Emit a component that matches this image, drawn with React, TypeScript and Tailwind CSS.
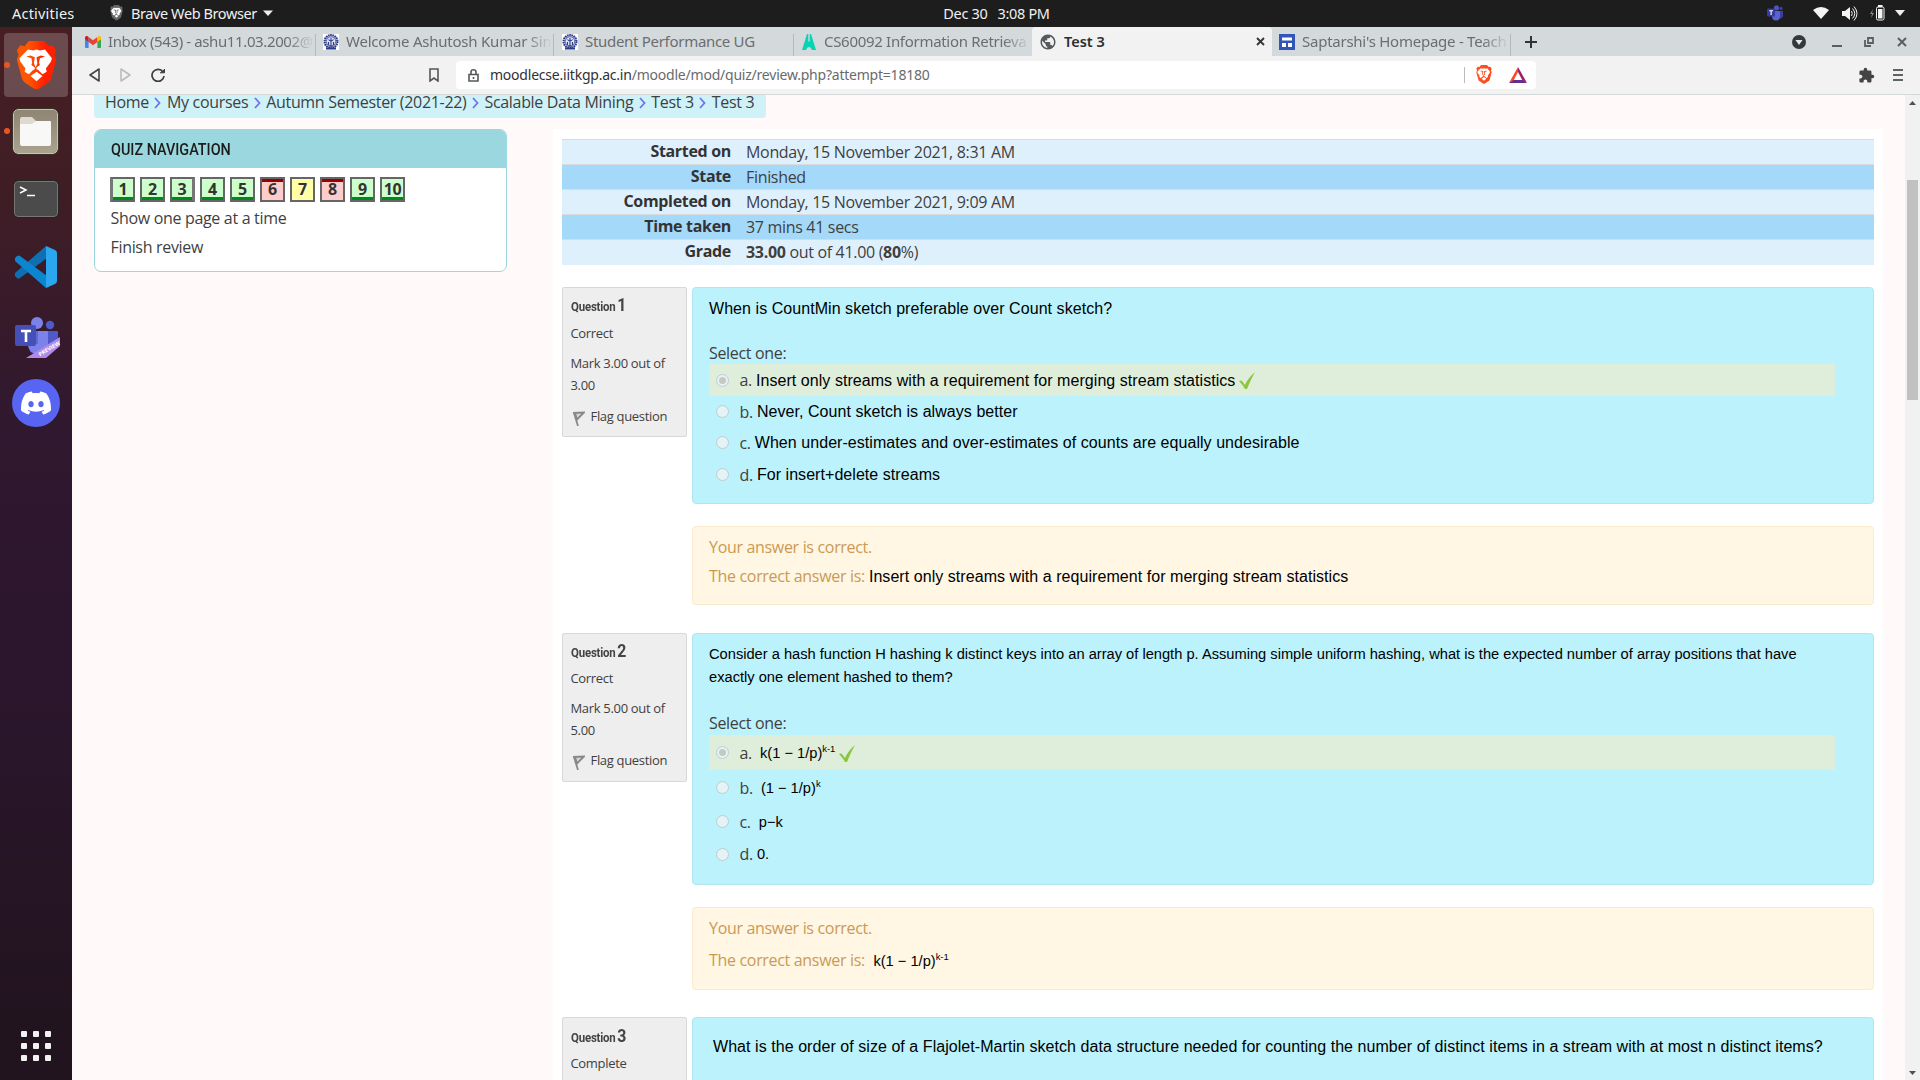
import React from "react";
import { SiDiscord } from "react-icons/si";
import { MdExtension, MdPublic } from "react-icons/md";

const OS = "font-['Open_Sans',sans-serif] tracking-[-0.32px]";
const LS = "font-['Liberation_Sans',Arial,sans-serif] tracking-[0.055px]";
const LS_SMALL = "font-['Liberation_Sans',Arial,sans-serif] text-[14.670px] tracking-normal";
const UI = "font-['Noto_Sans',sans-serif]";

function Lion({ size, id, a, b }: { size: number; id: string; a: string; b: string }) {
  return (
    <svg width={size} height={size * 1.19} viewBox="0 0 48 57">
      <defs>
        <linearGradient id={id} x1="0" x2="1">
          <stop offset="0.3" stopColor={a} />
          <stop offset="0.7" stopColor={b} />
        </linearGradient>
      </defs>
      <path fill={`url(#${id})`} d="M15 0h18l5 6 5-1 4 6-2 5 2 6-6 22q-1 3-4 5l-9 6-4 2-4-2-9-6q-3-2-4-5L1 22l2-6-2-5 4-6 5 1z" />
      <path fill="#fff" d="M14 10l6 1 4-1 4 1 6-1 8 10-1 4-6 8 1 4-5 3-5-5-2-1v-2l4-3-1-3 1-5 6-2-5-1-5 2 1 7-2 5-2-5 1-7-5-2-5 1 6 2 1 5-1 3 4 3v2l-2 1-5 5-5-3 1-4-6-8-1-4z" />
      <path fill="#fff" d="M24 36l7 5-7 6-7-6z" />
    </svg>
  );
}

function Gear() {
  return (
    <svg width="16" height="16" viewBox="0 0 16 16" className="shrink-0 bg-white">
      <circle cx="8" cy="7.5" r="6.4" fill="#dfe2f2" stroke="#2d3c86" strokeWidth="2.200" strokeDasharray="1.6 .6" />
      <circle cx="8" cy="7.5" r="4.700" fill="none" stroke="#47549a" strokeWidth=".8" />
      <path d="M8 4v8M5.500 5.500q2.500 3 5 0M6 12h4M5.500 8v3M10.500 8v3" fill="none" stroke="#2d3c86" strokeWidth="1.100" />
      <path d="M3 14.500h10" stroke="#2d3c86" strokeWidth="2" />
    </svg>
  );
}

function Gmail() {
  return (
    <svg width="16" height="12" viewBox="0 0 16 12" className="shrink-0">
      <path fill="#4285f4" d="M0 3v8q0 1 1 1h2.600V5z" />
      <path fill="#34a853" d="M12.400 12H15q1 0 1-1V3l-3.600 2z" />
      <path fill="#ea4335" d="M3.600 6V1L8 4.300 12.400 1v5L8 9.200z" />
      <path fill="#fbbc04" d="M12.400 1v5L16 3.200V1.700c0-1.500-1.700-2.200-2.800-1.300z" />
      <path fill="#c5221f" d="M0 1.700v1.500L3.600 6V1L2.800.4C1.700-.5 0 .2 0 1.700z" />
    </svg>
  );
}

function TeamsMark({ size }: { size: number }) {
  return (
    <svg width={size} height={size} viewBox="0 0 46 46">
      <circle cx="35" cy="9" r="4.200" fill="#5059c9" />
      <path fill="#5059c9" d="M32 15h10q1 0 1 1v12q0 5-6 7h-5z" />
      <circle cx="22" cy="7" r="6" fill="#7b83eb" />
      <path fill="#7b83eb" d="M13 15h19q1 0 1 1v12q0 10-10 10T13 28z" />
      <path fill="#6069cf" d="M13 15h10v13H13z" />
      <rect y="9" width="21" height="21" rx="2" fill="#464eb8" />
      <path d="M6 15h10M11 15v11" stroke="#fff" strokeWidth="2.600" />
    </svg>
  );
}

function TeamsTray() {
  return (
    <svg width="17" height="16" viewBox="0 0 17 16">
      <circle cx="14" cy="3.500" r="1.700" fill="#3a3fa0" />
      <path fill="#3a3fa0" d="M12 6h4v5q0 2-2.500 2.500H12z" />
      <circle cx="9.500" cy="2.800" r="2.600" fill="#4b53bc" />
      <path fill="#5a62d2" d="M5 6h8v5q0 4.500-4 4.500T5 11z" />
      <rect y="3.500" width="8" height="8" rx="1" fill="#363ba0" />
      <path d="M2.200 5.800h3.800M4.100 5.800V10" stroke="#fff" strokeWidth="1.100" />
    </svg>
  );
}

function Tab({ icon, text, w, tr, sep = true, fade = true }: { icon: React.ReactNode; text: string; w: string; tr: string; sep?: boolean; fade?: boolean }) {
  return (
    <div className={`flex h-[29px] shrink-0 items-center pt-px ${w}`}>
      <div className="flex w-[23px] shrink-0 items-center">{icon}</div>
      <div className={`min-w-0 flex-1 whitespace-nowrap pb-[2px] text-[15px] text-[#6a6e70] ${fade ? "[mask-image:linear-gradient(to_right,black_88%,rgba(0,0,0,0.15)_99%)]" : ""} ${tr}`}>{text}</div>
      <div className={`ml-[3px] h-[22px] w-px self-end ${sep ? "bg-[#b4b9bc]" : ""}`} />
    </div>
  );
}

function TopBar() {
  return (
    <div className={`grid h-[27px] grid-cols-[1fr_auto_1fr] items-center bg-[#1d1d1d] pb-px text-[14.500px] text-[#f0f0f0] ${UI}`}>
      <div className="flex items-center pl-3">
        <span className="w-[98px] tracking-[0.2px]">Activities</span>
        <span className="flex w-[21px]"><Lion size={13} id="lt" a="#666" b="#666" /></span>
        <span className="tracking-[-0.41px]">Brave Web Browser</span>
        <svg width="10" height="6" className="ml-[6px]"><path d="M0 .5h10L5 6z" fill="#eee" /></svg>
      </div>
      <div className="whitespace-pre pl-[73px] tracking-[-0.35px]">Dec 30   3:08 PM</div>
      <div className="flex items-center justify-end pr-[15px]">
        <div className="mr-[29px]"><TeamsTray /></div>
        <svg width="16" height="12" viewBox="0 0 16 12" className="mr-[13px]"><path d="M0 3Q8-3 16 3L8 12z" fill="#f4f4f4" /></svg>
        <svg width="16" height="15" viewBox="0 0 16 15" className="mr-[12px]" fill="none" stroke="#f4f4f4">
          <path d="M0 5h3l5-4v13L3 10H0z" fill="#f4f4f4" stroke="none" />
          <path d="M9.500 5q1.500 2.500 0 5" /><path d="M10.500 2.500q4.500 5 0 10M12 .5q6 7 0 14" />
        </svg>
        <svg width="15" height="16" viewBox="0 0 15 16" className="mr-[10px]">
          <path d="M3 4L0 9h2l-1 4 3-5H2z" fill="#888" />
          <rect x="6.500" y="2" width="7.500" height="13" rx="1.500" fill="none" stroke="#f4f4f4" />
          <path d="M8 4h4.500v9.500H8zM8 0h4.500v2H8z" fill="#f4f4f4" />
        </svg>
        <svg width="10" height="6"><path d="M0 0h10L5 6z" fill="#eee" /></svg>
      </div>
    </div>
  );
}

function Dock() {
  return (
    <div className="flex w-[72px] shrink-0 flex-col bg-[linear-gradient(#471f22_0px,#3f1d26_180px,#30182f_400px,#2b162d_650px,#22141f_1000px)]">
      <div className="flex h-[72px] items-center pt-1">
        <div className="relative ml-1 flex h-16 w-16 items-center justify-center rounded bg-white/20">
          <div className="absolute left-0 top-[29px] h-[6px] w-[6px] rounded-full bg-[#e95420]" />
          <Lion size={41} id="ld" a="#ff5500" b="#ff2000" />
        </div>
      </div>
      <div className="flex h-[64px] items-center">
        <div className="ml-1 mr-[3px] h-[6px] w-[6px] rounded-full bg-[#e95420]" />
        <div className="flex h-[45px] w-[45px] items-center justify-center rounded-[5px] border border-[#c9c2b3] bg-linear-to-b from-[#8e8673] to-[#aaa18f] outline outline-1 outline-[#3a302a]">
          <svg width="33" height="29"><path d="M1 2q0-2 2-2h10l4 4h14v6H1z" fill="#dedad0" /><path d="M1 7h12l4-3h14q1 0 1 1v22q0 2-2 2H3q-2 0-2-2z" fill="#f8f8f7" /></svg>
        </div>
      </div>
      <div className="flex h-[72px] items-center justify-center">
        <div className="h-[36px] w-[44px] rounded-[4px] border border-[#777] bg-[#4b4b4b] outline outline-1 outline-[#252525]">
          <svg width="42" height="32"><path d="M5 5l6 3-6 3" fill="none" stroke="#fff" strokeWidth="1.500" /><path d="M12 13.500h8" stroke="#fff" strokeWidth="1.500" /></svg>
        </div>
      </div>
      <div className="flex h-[64px] items-center justify-center">
        <svg width="42" height="42" viewBox="0 0 42 42">
          <path fill="#0f6fb3" d="M31 0l1 12L5 32q-1 1-3 0l-2-2q-1-1 0-3z" />
          <path fill="#0c86cf" d="M31 42l1-12L5 10q-1-1-3 0l-2 2q-1 1 0 3z" />
          <path fill="#2aa7ee" d="M31 0l9 4q2 1 2 3v28q0 2-2 3l-9 4z" />
        </svg>
      </div>
      <div className="flex h-[72px] items-center pl-[15px] pt-[7px]">
        <div className="relative h-[46px] w-[46px]">
          <TeamsMark size={46} />
          <svg width="46" height="46" className="absolute left-0 top-[-1px]"><path d="M11 43L45 22v9L31 43z" fill="#b08ae8" /><text x="25" y="41.500" fontSize="5.500" letterSpacing="0" fontWeight="700" fill="#fff" fontFamily="Open Sans" transform="rotate(-31 25 41.500)">PREVIEW</text></svg>
        </div>
      </div>
      <div className="flex h-[64px] items-center justify-center">
        <div className="flex h-12 w-12 items-center justify-center rounded-full bg-[#5865f2]"><SiDiscord size={30} color="#fff" /></div>
      </div>
      <div className="mt-auto mb-[19px] grid grid-cols-[6px_6px_6px] justify-center gap-[6px]">
        {Array.from({ length: 9 }, (_, i) => <div key={i} className="h-[6px] w-[6px] rounded-[1px] bg-[#f2f2f0]" />)}
      </div>
    </div>
  );
}

function Chrome() {
  return (
    <div className={`shrink-0 tracking-normal ${UI}`}>
      <div className="flex h-[29px] bg-[#d4d9dc] pl-[13px]">
        <Tab icon={<Gmail />} text="Inbox (543) - ashu11.03.2002@" w="w-[231px]" tr="tracking-[-0.38px]" />
        <div className="w-[7px]" />
        <Tab icon={<Gear />} text="Welcome Ashutosh Kumar Sin" w="w-[231px]" tr="tracking-[-0.22px]" />
        <div className="w-[8px]" />
        <Tab icon={<Gear />} text="Student Performance UG" w="w-[232px]" tr="tracking-[-0.3px]" fade={false} />
        <div className="w-[7px]" />
        <Tab
          icon={<svg width="16" height="16" viewBox="0 0 16 16"><path d="M6 0h4l5 16h-4q-1-3-3-3t-3 3H1zM7.300 0v7q.7 1.500 1.400 0V0z" fill="#08d3b2" fillRule="evenodd" /></svg>}
          text="CS60092 Information Retrieva" w="w-[231px]" tr="tracking-[-0.3px]" sep={false}
        />
        <div className="flex w-[240px] items-center rounded-t bg-[#f2f2f2] pl-[7px]">
          <MdPublic size={18} color="#565a5c" />
          <span className="ml-[7px] pb-px text-[14.500px] font-semibold text-[#2c2e30]">Test 3</span>
          <svg width="9" height="9" className="ml-auto mr-[7px]"><path d="M1 1l7 7M8 1l-7 7" stroke="#333" strokeWidth="1.800" /></svg>
        </div>
        <div className="w-[7px]" />
        <Tab
          icon={<svg width="16" height="16"><rect width="16" height="16" fill="#3156b8" /><path d="M3 3.500h10v3H3zM3 9h4v4H3zM9 9h4v4H9z" fill="#fff" /></svg>}
          text="Saptarshi's Homepage - Teach" w="w-[232px]" tr="tracking-[-0.25px]"
        />
        <div className="flex flex-1 items-center pl-[14px]">
          <svg width="12" height="12"><path d="M6 0v12M0 6h12" stroke="#333" strokeWidth="2" /></svg>
          <svg width="14" height="14" className="ml-auto mr-[26px]"><circle cx="7" cy="7" r="7" fill="#36393b" /><path d="M3.500 5h7L7 10z" fill="#e8eaeb" /></svg>
          <svg width="10" height="12" className="mr-[22px]"><path d="M0 10h10" stroke="#5b5f61" strokeWidth="2" /></svg>
          <svg width="10" height="10" className="mr-[23px]" fill="none" stroke="#5b5f61" strokeWidth="1.800"><path d="M4 1h5v5H4zM1 3v6h6" /></svg>
          <svg width="10" height="10" className="mr-[13px]"><path d="M1 1l8 8M9 1L1 9" stroke="#5b5f61" strokeWidth="2" /></svg>
        </div>
      </div>
      <div className="flex h-[39px] items-center border-b border-[#d3d8db] bg-[#f2f2f2]">
        <svg width="12" height="14" className="ml-[16px]" fill="none" stroke="#444" strokeWidth="1.600" strokeLinejoin="round"><path d="M11 1v12L2 7z" /></svg>
        <svg width="12" height="14" className="ml-[20px]" fill="none" stroke="#bbb" strokeWidth="1.600" strokeLinejoin="round"><path d="M1 1v12l9-6z" /></svg>
        <svg width="14" height="14" className="ml-[19px]" fill="none" stroke="#3c3f41" strokeWidth="1.700"><path d="M12 4A6 6 0 1 0 13 8" /><path d="M9 4.800h4.500V1" fill="#3c3f41" strokeWidth="1" /></svg>
        <svg width="10" height="14" className="ml-[264px]" fill="none" stroke="#555" strokeWidth="1.600"><path d="M1 1h8v12L5 10l-4 3z" /></svg>
        <div className="ml-[17px] flex h-[28px] w-[1080px] items-center rounded-[4px] bg-white pl-[12px]">
          <svg width="11" height="13" fill="none" stroke="#55585a" strokeWidth="1.600"><path d="M1 5.500h9V12H1zM3 5.500V3a2.500 2.200 0 0 1 5 0v2.500" /><path d="M5.500 8v2" /></svg>
          <span className="ml-[11px] whitespace-nowrap text-[14px] tracking-[-0.22px] text-[#686b6d]"><span className="text-[#2f3234]">moodlecse.iitkgp.ac.in</span>/moodle/mod/quiz/review.php?attempt=18180</span>
          <div className="ml-auto mr-[11px] h-4 w-px bg-[#bbb]" />
          <span className="flex w-[33px]"><Lion size={16} id="ls" a="#fb542b" b="#fb4a1b" /></span>
          <svg width="18" height="16" className="mr-[9px]"><path d="M9 0L0 16l4.500-2.500L9 5z" fill="#ff4724" /><path d="M9 0l9 16-4.500-2.500L9 5z" fill="#9e1f63" /><path d="M0 16h18l-4.500-3h-9z" fill="#662d91" /></svg>
        </div>
        <MdExtension size={17} color="#444" className="ml-auto mr-[18px]" />
        <svg width="10" height="12" className="mr-[17px]"><path d="M0 1h10M0 6h10M0 11h10" stroke="#606365" strokeWidth="1.800" /></svg>
      </div>
    </div>
  );
}

function Chevron() {
  return <svg width="7" height="12" className="mx-[5.500px] mt-[2px]" fill="none" stroke="#6f73e8" strokeWidth="1.800"><path d="M1 1l4.500 5L1 11" /></svg>;
}

const CRUMBS = ["Home", "My courses", "Autumn Semester (2021-22)", "Scalable Data Mining", "Test 3", "Test 3"];

function QuizNav() {
  const kinds = "gggggryrgg";
  return (
    <div className="mt-[11px] h-[143px] w-[413px] overflow-hidden rounded-[7px] border border-[#9ad7de] bg-white">
      <div className="flex h-[38px] items-center bg-[#9ad7de] pl-4 pt-px">
        <span className="origin-left scale-x-[0.9] font-[Roboto] text-[16px] font-medium tracking-normal text-[#1c1c1c]">QUIZ NAVIGATION</span>
      </div>
      <div className="flex gap-[5px] pl-[15px] pt-[9px]">
        {kinds.split("").map((k, i) => (
          <div
            key={i}
            className={`flex h-[25px] w-[25px] items-center justify-center border-2 border-[#666] pb-px text-[16px] font-bold leading-none text-[#333] ${i === 0 ? "border-l-[3px] border-l-[#777]" : i === 2 ? "border-r-[3px] border-r-[#777]" : ""} ${k === "g" ? "bg-[linear-gradient(#cfc_0_18px,#008a1c_18px)]" : k === "r" ? "bg-[linear-gradient(#900_0_3px,#fcc_3px)]" : "bg-[#ffffa8]"}`}
          >
            {i + 1}
          </div>
        ))}
      </div>
      <div className="ml-[15.500px] mt-px flex h-[29px] items-center">Show one page at a time</div>
      <div className="ml-[15.500px] flex h-[29px] items-center">Finish review</div>
    </div>
  );
}

const ROWS: [string, React.ReactNode][] = [
  ["Started on", "Monday, 15 November 2021, 8:31 AM"],
  ["State", "Finished"],
  ["Completed on", "Monday, 15 November 2021, 9:09 AM"],
  ["Time taken", "37 mins 41 secs"],
  ["Grade", <span key="g"><b>33.00</b> out of 41.00 (<b>80</b>%)</span>],
];

function Radio({ on }: { on?: boolean }) {
  return (
    <span className="ml-[7px] mr-[10px] flex h-[13px] w-[13px] shrink-0 items-center justify-center rounded-full border border-[#c0ccce] bg-[#e4f3f6]">
      {on && <span className="h-[7px] w-[7px] rounded-full bg-[#c5c9c3]" />}
    </span>
  );
}

function Check() {
  return <svg width="17" height="17" viewBox="0 0 17 17" className="ml-[4px] mt-px"><path d="M0 9q2-1 3 0l3 4Q9 6 16 0q-4 7-8 17H6Q3 12 0 9z" fill="#8cc63f" /></svg>;
}

function Opt({ l, h, on, small, pre, children }: { l: string; h: string; on?: boolean; small?: boolean; pre?: string; children: React.ReactNode }) {
  return (
    <div className={`flex w-[1126px] items-center ${h} ${on ? "bg-[#deeeda]" : ""}`}>
      <Radio on={on} />
      <span className="ml-[0.500px] mr-[4px]">{l}.</span>
      <span className={`text-black ${small ? LS_SMALL : LS} ${pre ?? ""}`}>{children}</span>
      {on && <Check />}
    </div>
  );
}

function Info({ n, state, mark, h, top }: { n: number; state: string; mark: string; h: string; top: string }) {
  return (
    <div className={`mr-[5px] w-[125px] shrink-0 rounded-[2px] border border-[#d8d8d8] bg-[#eee] pl-[7.500px] text-[13px] ${h}`}>
      <div className={`flex h-[26px] origin-left scale-x-[0.88] items-baseline gap-[2px] font-[Roboto] font-bold tracking-[-0.22px] text-[#444] ${top}`}>
        <span className="text-[13px]">Question</span>
        <span className="text-[18px] leading-[24px]">{n}</span>
      </div>
      <div className={`flex h-[22px] items-center ${n === 2 ? "mb-px mt-[7px]" : "mt-[8px]"}`}>{state}</div>
      {mark && (
        <>
          <div className="mt-[8px] h-[44px] w-[105px] leading-[22px]">Mark {mark} out of {mark}</div>
          <div className={`flex h-[22px] items-center ${n === 2 ? "mt-[8px]" : "mt-[9px]"}`}>
            <svg width="14" height="15" className="mr-[6px] mt-[4px]" fill="none" stroke="#888" strokeWidth="1.800"><path d="M3 2l4 13" /><path d="M2 2l11-.5-7 7L4 2" fill="#d4d4d4" /></svg>
            Flag question
          </div>
        </>
      )}
    </div>
  );
}

const BOX = "flex-1 rounded-[4px] border border-[#b0e6ef] bg-[#bbf2fc] pl-4";
const FEED = "ml-[130px] rounded-[4px] border border-[#faebcc] bg-[#fff6e3] pl-4 text-[#cb9a54]";

function Pow({ base, exp }: { base: string; exp: string }) {
  return <>{base}<sup className="relative top-[-6px] align-baseline text-[9.500px] leading-none tracking-[-0.1px]">{exp}</sup></>;
}

export default function App() {
  return (
    <div className={`flex h-[1080px] w-[1920px] flex-col overflow-hidden text-[16px] leading-[24px] text-[#3f3f3f] ${OS}`}>
      <TopBar />
      <div className="flex min-h-0 flex-1">
        <Dock />
        <div className="flex min-w-0 flex-1 flex-col">
          <Chrome />
          <div className="flex min-h-0 flex-1 bg-[#fff9f9]">
            <div className="min-w-0 flex-1 pl-[22px]">
              <div className="flex h-[23px] w-[672px] items-center whitespace-nowrap rounded-b-[4px] bg-[#cff2f9] pb-[10px] pl-[11px]">
                {CRUMBS.map((c, i) => (
                  <React.Fragment key={i}>{i > 0 && <Chevron />}{c}</React.Fragment>
                ))}
              </div>
              <div className="flex">
                <QuizNav />
                <div className="ml-[46px] mt-[11px] h-[1000px] w-[1330px] bg-white pl-[9px] pr-[9px] pt-[10px]">
                  <div className="h-[126px]">
                    {ROWS.map(([k, v], i) => (
                      <div key={k} className={`flex items-center border-t border-[#d8dcdf] ${i === 4 ? "h-[26px] pb-px" : "h-[25px]"} ${i % 2 ? "bg-[#a5d9fa]" : "bg-[#dff0fd]"}`}>
                        <div className="mr-[15px] w-[169px] pb-[2px] text-right font-bold text-[#333]">{k}</div>
                        <div>{v}</div>
                      </div>
                    ))}
                  </div>
                  <div className="mt-[22px] flex h-[217px] items-start">
                    <Info n={1} state="Correct" mark="3.00" h="h-[150px]" top="pt-[5px]" />
                    <div className={`h-[217px] ${BOX}`}>
                      <div className={`mt-[9px] flex h-6 items-center text-black ${LS}`}>When is CountMin sketch preferable over Count sketch?</div>
                      <div className="mt-[20px] flex h-[23px] items-center">Select one:</div>
                      <Opt l="a" h="h-[32px]" on pre="pt-px">Insert only streams with a requirement for merging stream statistics</Opt>
                      <Opt l="b" h="h-[31px]">Never, Count sketch is always better</Opt>
                      <Opt l="c" h="h-[31px]">When under-estimates and over-estimates of counts are equally undesirable</Opt>
                      <Opt l="d" h="h-[33px]">For insert+delete streams</Opt>
                    </div>
                  </div>
                  <div className={`mt-[22px] h-[79px] ${FEED}`}>
                    <div className="mt-[6px] flex h-[28px] items-center">Your answer is correct.</div>
                    <div className="flex h-[29px] items-center">The correct answer is:<span className={`ml-[4px] pt-[2px] text-black ${LS}`}>Insert only streams with a requirement for merging stream statistics</span></div>
                  </div>
                  <div className="mt-[28px] flex h-[252px] items-start">
                    <Info n={2} state="Correct" mark="5.00" h="h-[149px]" top="pt-[5px]" />
                    <div className={`h-[252px] ${BOX}`}>
                      <div className={`mt-[9px] h-[46px] w-[1126px] leading-[23px] text-black ${LS_SMALL}`}>Consider a hash function H hashing k distinct keys into an array of length p. Assuming simple uniform hashing, what is the expected number of array positions that have exactly one element hashed to them?</div>
                      <div className="mt-[22px] flex h-[24px] items-center">Select one:</div>
                      <Opt l="a" h="h-[35px]" on small pre="ml-1"><Pow base="k(1 − 1/p)" exp="k-1" /></Opt>
                      <Opt l="b" h="h-[35px]" small pre="ml-1"><Pow base="(1 − 1/p)" exp="k" /></Opt>
                      <Opt l="c" h="h-[33px]" small pre="ml-1">p−k</Opt>
                      <Opt l="d" h="h-[32px]" small>0.</Opt>
                    </div>
                  </div>
                  <div className={`mt-[22px] h-[83px] ${FEED}`}>
                    <div className="mt-[6px] flex h-[28px] items-center">Your answer is correct.</div>
                    <div className="mt-[3px] flex h-[29px] items-center">The correct answer is:<span className={`ml-[8.500px] pt-[2px] text-black ${LS_SMALL}`}><Pow base="k(1 − 1/p)" exp="k-1" /></span></div>
                  </div>
                  <div className="mt-[27px] flex items-start">
                    <Info n={3} state="Complete" mark="" h="h-[149px]" top="pt-[6px]" />
                    <div className={`h-[200px] ${BOX}`}>
                      <div className={`ml-1 mt-[17px] flex h-6 items-center text-black ${LS}`}>What is the order of size of a Flajolet-Martin sketch data structure needed for counting the number of distinct items in a stream with at most n distinct items?</div>
                    </div>
                  </div>
                </div>
              </div>
            </div>
            <div className="flex w-[15px] flex-col items-center justify-between bg-[#f1f1f1] pt-[6px] pb-[5px]">
              <svg width="7" height="4"><path d="M0 4L3.500 0 7 4z" fill="#505050" /></svg>
              <div className="mb-auto mt-[75px] h-[220px] w-[11px] bg-[#c1c1c1]" />
              <svg width="7" height="4"><path d="M0 0l3.500 4L7 0z" fill="#505050" /></svg>
            </div>
          </div>
        </div>
      </div>
    </div>
  );
}
